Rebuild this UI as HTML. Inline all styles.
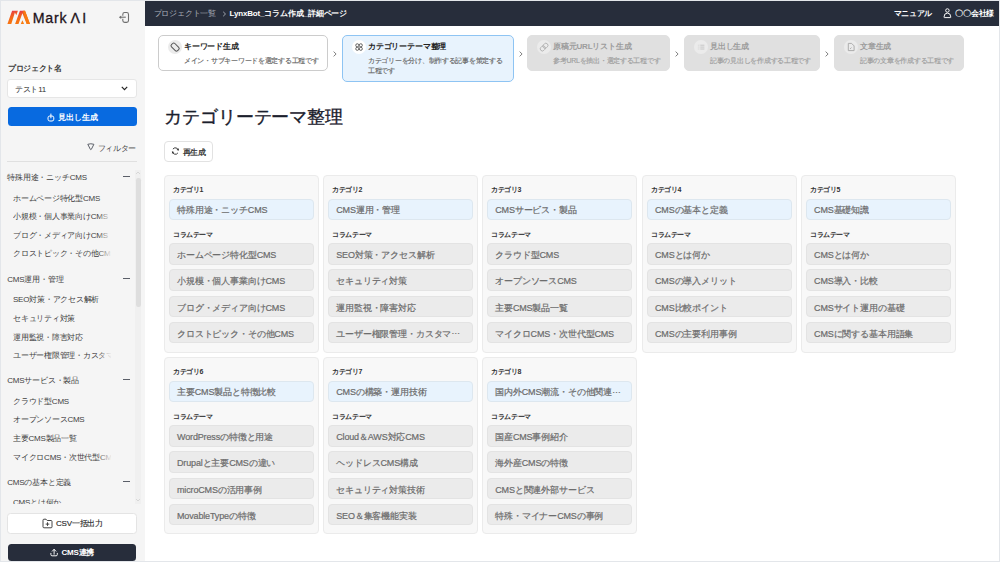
<!DOCTYPE html>
<html lang="ja"><head><meta charset="utf-8">
<style>
*{box-sizing:border-box;margin:0;padding:0}
html,body{width:1000px;height:562px;overflow:hidden;background:#fff;font-family:"Liberation Sans",sans-serif;position:relative}
.abs{position:absolute;white-space:nowrap}
#side{position:absolute;left:0;top:0;width:145px;height:562px;background:#f5f5f5}
#hdr{position:absolute;left:145px;top:1px;width:854px;height:25px;background:#272d3b}
.fr{position:absolute;background:#e3e6ea}
.t{position:absolute;white-space:nowrap;line-height:12px}
/* stepper */
.step{position:absolute;top:35px;height:36px;border-radius:5px;background:#e0e0e0;border:1px solid #e0e0e0}
.step .ic{position:absolute;left:8.6px;top:3.6px;width:14px;height:14px;border-radius:50%;background:#ebebeb}
.step .tt{position:absolute;left:25px;top:5px;font-size:8px;letter-spacing:-0.17px;font-weight:bold;line-height:12px;color:#9c9c9c;white-space:nowrap}
.step .st{position:absolute;left:25px;top:20.4px;font-size:7px;letter-spacing:-0.27px;line-height:10px;color:#9e9e9e;-webkit-text-stroke:0.15px currentColor;white-space:nowrap}
.arr{position:absolute;top:48px;font-size:9px;color:#666;line-height:10px}
/* cards */
.card{position:absolute;width:155px;background:#f8f8f8;border:1px solid #ebebeb;border-radius:4px}
.card .lab{position:absolute;left:8px;font-size:7px;letter-spacing:-0.4px;font-weight:bold;color:#333;line-height:10px;white-space:nowrap}
.card .fld{position:absolute;left:4px;width:145px;height:21.6px;border-radius:4px;font-size:9px;letter-spacing:-0.15px;line-height:22px;padding-left:7px;white-space:nowrap;overflow:hidden;color:#6b6b6b;-webkit-text-stroke:0.2px #6b6b6b}
.card .cat{background:#e8f3fd;border:1px solid #dde7ef;height:21px;line-height:21.2px}
.card .th{background:#ebebeb;border:1px solid #e3e3e3}
/* sidebar list */
.gh{position:absolute;left:7.2px;font-size:8px;letter-spacing:-0.19px;line-height:10px;color:#404040;white-space:nowrap}
.gm{position:absolute;left:123px;width:7px;height:1.1px;background:#5a5e68}
.it{position:absolute;left:13px;font-size:8px;letter-spacing:-0.23px;line-height:10px;color:#404040;white-space:nowrap;width:98px;overflow:hidden}
</style></head><body>

<!-- sidebar -->
<div id="side">
  <!-- logo -->
  <svg class="abs" style="left:0;top:0" width="32" height="30" viewBox="0 0 32 30">
    <defs><linearGradient id="lg" gradientUnits="userSpaceOnUse" x1="11" y1="9" x2="17" y2="22">
      <stop offset="0" stop-color="#d81f74"/><stop offset="0.28" stop-color="#ea4a36"/><stop offset="0.6" stop-color="#f56a16"/><stop offset="1" stop-color="#f87c10"/></linearGradient>
      <linearGradient id="lg2" gradientUnits="userSpaceOnUse" x1="19" y1="9" x2="25" y2="22">
      <stop offset="0" stop-color="#d81f74"/><stop offset="0.28" stop-color="#ea4a36"/><stop offset="0.6" stop-color="#f56a16"/><stop offset="1" stop-color="#f87c10"/></linearGradient></defs>
    <path d="M7.4 24 L12.1 10.7 L17.9 10.7 L16.3 15.3 L14.9 12.4 L11.3 24 Z" fill="url(#lg)"/>
    <path d="M15.1 24 L19.9 10.7 L25 10.7 L30 24 L26.7 24 L22.4 13.3 L18.5 24 Z" fill="url(#lg2)"/>
    <path d="M20.8 24 L22.4 20.2 L24.1 24 Z" fill="#f87c10"/>
    <path d="M22.9 10.7 L25 10.7 L30 24 L26.7 24 Z" fill="#f77a12"/>
  </svg>
  <div class="t" style="left:32.8px;top:10px;font-size:14.2px;line-height:16px;color:#221219;letter-spacing:0.75px;-webkit-text-stroke:0.3px #221219">Mark</div>
  <div class="t" style="left:70.6px;top:10px;font-size:14.2px;line-height:16px;color:#221219;-webkit-text-stroke:0.3px #221219">Λ</div>
  <div class="t" style="left:82.2px;top:10px;font-size:14.2px;line-height:16px;color:#221219;-webkit-text-stroke:0.3px #221219">I</div>
  <!-- collapse icon -->
  <svg class="abs" style="left:118px;top:11px" width="12" height="12" viewBox="0 0 12 12">
    <path d="M4.8 4.7 V3.4 a1.9 1.9 0 0 1 1.9 -1.9 H8.6 a1.9 1.9 0 0 1 1.9 1.9 V9.5 a1.9 1.9 0 0 1 -1.9 1.9 H6.7 a1.9 1.9 0 0 1 -1.9 -1.9 V7.7" fill="none" stroke="#6e6e6e" stroke-width="1.1"/>
    <path d="M2.4 6.2 H7.8" stroke="#6e6e6e" stroke-width="1.1"/>
    <path d="M0.9 6.2 L3.2 4.5 V7.9 Z" fill="#6e6e6e"/>
  </svg>

  <div class="t" style="left:8px;top:62.5px;font-size:8px;letter-spacing:-0.34px;font-weight:bold;color:#3a3a3a">プロジェクト名</div>
  <div class="abs" style="left:7px;top:78.6px;width:129.5px;height:19px;background:#fff;border:1px solid #e6e6e6;border-radius:3px"></div>
  <div class="t" style="left:15px;top:84px;font-size:8px;letter-spacing:-0.28px;color:#333">テスト11</div>
  <svg class="abs" style="left:121px;top:85.5px" width="7" height="5" viewBox="0 0 7 5"><path d="M0.8 0.9 L3.5 3.6 L6.2 0.9" fill="none" stroke="#222" stroke-width="1.2"/></svg>

  <div class="abs" style="left:8px;top:107.45px;width:128.5px;height:18.75px;background:#086ae0;border-radius:3.5px"></div>
  <svg class="abs" style="left:46.5px;top:112.5px" width="8" height="9" viewBox="0 0 8 9"><rect x="1" y="3" width="5.8" height="5" rx="1.8" fill="none" stroke="#fff" stroke-width="1"/><path d="M3.9 0.6 V5.3" stroke="#fff" stroke-width="1"/></svg>
  <div class="t" style="left:58px;top:112px;font-size:8px;letter-spacing:-0.12px;font-weight:bold;color:#fff">見出し生成</div>

  <svg class="abs" style="left:87.2px;top:143.2px" width="8" height="8" viewBox="0 0 8 8"><path d="M0.8 1.3 Q3.8 0.2 6.9 1.3 L4.3 6.4 Q3.85 7.1 3.4 6.4 Z" fill="none" stroke="#555a63" stroke-width="0.95" stroke-linejoin="round"/></svg>
  <div class="t" style="left:97.5px;top:143.3px;font-size:8px;letter-spacing:-0.32px;color:#444">フィルター</div>
  <div class="abs" style="left:7px;top:160.6px;width:130px;height:1px;background:#e0e0e0"></div>

  <!-- scrollbar -->
  <div class="abs" style="left:135px;top:169.5px;width:6px;height:334.5px;background:#f0f0f0"></div><svg class="abs" style="left:135px;top:170px" width="6" height="6" viewBox="0 0 6 6"><path d="M1 4 L3 2 L5 4" fill="none" stroke="#d4d4d4" stroke-width="0.9"/></svg><svg class="abs" style="left:135px;top:497px" width="6" height="6" viewBox="0 0 6 6"><path d="M1 2 L3 4 L5 2" fill="none" stroke="#d4d4d4" stroke-width="0.9"/></svg>
  <div class="abs" style="left:136px;top:178px;width:4.5px;height:129px;background:#dedede;border-radius:2.2px"></div>

  <div class="gh" style="top:173.3px">特殊用途・ニッチCMS</div><div class="gm" style="top:176.4px"></div>
  <div class="it" style="top:193.5px">ホームページ特化型CMS</div>
  <div class="it" style="top:212.1px">小規模・個人事業向けCMS</div>
  <div class="it" style="top:230.7px">ブログ・メディア向けCMS</div>
  <div class="it" style="top:249.3px">クロストピック・その他CMS</div>

  <div class="gh" style="top:274.9px">CMS運用・管理</div><div class="gm" style="top:278.4px"></div>
  <div class="it" style="top:295.4px">SEO対策・アクセス解析</div>
  <div class="it" style="top:314.0px">セキュリティ対策</div>
  <div class="it" style="top:332.7px">運用監視・障害対応</div>
  <div class="it" style="top:350.9px">ユーザー権限管理・カスタマイズ</div>

  <div class="gh" style="top:376.3px">CMSサービス・製品</div><div class="gm" style="top:379.4px"></div>
  <div class="it" style="top:396.7px">クラウド型CMS</div>
  <div class="it" style="top:415.3px">オープンソースCMS</div>
  <div class="it" style="top:433.9px">主要CMS製品一覧</div>
  <div class="it" style="top:452.5px">マイクロCMS・次世代型CMS</div>

  <div class="gh" style="top:478.3px">CMSの基本と定義</div><div class="gm" style="top:481.4px"></div>
  <div class="abs" style="left:0;top:504px;width:135px;height:8px;background:#f5f5f5"></div>
  <div class="it" style="top:497.5px;height:6.6px">CMSとは何か</div>

  <!-- fade mask for truncated items -->
  <div class="abs" style="left:98px;top:170px;width:14px;height:335px;background:linear-gradient(90deg,rgba(245,245,245,0),#f5f5f5)"></div>

  <div class="abs" style="left:7px;top:513px;width:129.5px;height:20.5px;background:#fff;border:1px solid #e4e4e4;border-radius:3.5px"></div>
  <svg class="abs" style="left:42px;top:517.5px" width="11" height="11" viewBox="0 0 11 11"><path d="M1 2.2 a1 1 0 0 1 1 -1 H4 L5.2 2.5 H9 a1 1 0 0 1 1 1 V8.8 a1 1 0 0 1 -1 1 H2 a1 1 0 0 1 -1 -1 Z M5.5 4.3 V7.9 M3.7 6.1 H7.3" fill="none" stroke="#444" stroke-width="1"/></svg>
  <div class="t" style="left:56px;top:517.7px;font-size:8px;letter-spacing:-0.21px;color:#2a2a2a;-webkit-text-stroke:0.15px #2a2a2a">CSV一括出力</div>

  <div class="abs" style="left:8px;top:543.6px;width:128px;height:17px;background:#272d3b;border-radius:3.5px"></div>
  <svg class="abs" style="left:50px;top:547.5px" width="9" height="9" viewBox="0 0 9 9"><path d="M4.1 6.2 V1.5 M2.3 3.2 L4.1 1.3 L5.9 3.2 M0.9 5.3 V6.6 Q0.9 7.8 2.1 7.8 H6.1 Q7.3 7.8 7.3 6.6 V5.3" fill="none" stroke="#fff" stroke-width="0.95" stroke-linecap="round" stroke-linejoin="round"/></svg>
  <div class="t" style="left:61.5px;top:547px;font-size:8px;letter-spacing:-0.25px;font-weight:bold;color:#fff">CMS連携</div>
</div>

<!-- header -->
<div id="hdr">
  <div class="t" style="left:8.7px;top:7px;font-size:8px;letter-spacing:-0.21px;color:#aab0ba">プロジェクト一覧</div>
  <svg class="abs" style="left:76.5px;top:9.5px" width="5" height="6" viewBox="0 0 5 6"><path d="M1.2 0.8 L3.5 3 L1.2 5.2" fill="none" stroke="#b0b5bd" stroke-width="0.9"/></svg>
  <div class="t" style="left:84.5px;top:7px;font-size:8px;letter-spacing:-0.16px;font-weight:bold;color:#fff">LynxBot_コラム作成_詳細ページ</div>
  <div class="t" style="left:748.5px;top:7px;font-size:8px;letter-spacing:-0.32px;font-weight:bold;color:#fff">マニュアル</div>
  <svg class="abs" style="left:798px;top:7px" width="9" height="11" viewBox="0 0 9 11"><circle cx="4.4" cy="2.5" r="1.75" fill="none" stroke="#fff" stroke-width="0.95"/><path d="M1 9.1 Q1 5.1 4.4 5.1 Q7.8 5.1 7.8 9.1 Q7.8 9.6 7.3 9.6 H1.5 Q1 9.6 1 9.1 Z" fill="none" stroke="#fff" stroke-width="0.95"/></svg>
  <div class="t" style="left:810px;top:7px;font-size:8px;letter-spacing:-0.14px;font-weight:bold;color:#fff">〇〇会社様</div>
</div>

<!-- stepper -->
<div class="step" style="left:158px;width:170px;background:#fff;border:1px solid #cccccc">
  <div class="ic" style="background:#ebebeb"></div>
  <svg class="abs" style="left:8.6px;top:3.6px" width="14" height="14" viewBox="0 0 14 14"><rect x="-4.3" y="-2.4" width="8.6" height="4.8" rx="1.6" transform="translate(7.1 7.1) rotate(45)" fill="none" stroke="#555" stroke-width="1"/></svg>
  <div class="tt" style="left:25px;color:#222">キーワード生成</div>
  <div class="st" style="left:25px;color:#666">メイン・サブキーワードを選定する工程です</div>
</div>
<svg class="abs" style="left:333.4px;top:50.5px" width="4" height="6" viewBox="0 0 4 6"><path d="M0.6 0.6 L3.1 3 L0.6 5.4" fill="none" stroke="#7a7a7a" stroke-width="0.95"/></svg>
<div class="step" style="left:342px;width:172px;height:46.6px;background:#e8f3fd;border:1px solid #8ec4f3">
  <div class="ic" style="background:#fff"></div>
  <svg class="abs" style="left:8.6px;top:3.6px" width="14" height="14" viewBox="0 0 14 14"><g fill="none" stroke="#555" stroke-width="0.9"><circle cx="5.3" cy="5.3" r="1.55"/><circle cx="8.8" cy="5.3" r="1.55"/><circle cx="5.3" cy="8.8" r="1.55"/><circle cx="8.8" cy="8.8" r="1.55"/></g></svg>
  <div class="tt" style="left:25px;color:#222">カテゴリーテーマ整理</div>
  <div class="st" style="color:#666">カテゴリーを分け、制作する記事を策定する<br>工程です</div>
</div>
<svg class="abs" style="left:518.7px;top:50.5px" width="4" height="6" viewBox="0 0 4 6"><path d="M0.6 0.6 L3.1 3 L0.6 5.4" fill="none" stroke="#7a7a7a" stroke-width="0.95"/></svg>
<div class="step" style="left:527px;width:143px">
  <div class="ic"></div>
  <svg class="abs" style="left:8.6px;top:3.6px" width="14" height="14" viewBox="0 0 14 14"><g transform="translate(7.1 7.1) rotate(-45)" fill="none" stroke="#b0b0b0" stroke-width="0.9"><rect x="-4.6" y="-2.1" width="5.4" height="4.2" rx="2.1"/><rect x="-0.8" y="-2.1" width="5.4" height="4.2" rx="2.1"/></g></svg>
  <div class="tt">原稿元URLリスト生成</div>
  <div class="st">参考URLを抽出・選定する工程です</div>
</div>
<svg class="abs" style="left:674.9px;top:50.5px" width="4" height="6" viewBox="0 0 4 6"><path d="M0.6 0.6 L3.1 3 L0.6 5.4" fill="none" stroke="#7a7a7a" stroke-width="0.95"/></svg>
<div class="step" style="left:684px;width:136px">
  <div class="ic"></div>
  <svg class="abs" style="left:8.6px;top:3.6px" width="14" height="14" viewBox="0 0 14 14"><g stroke="#b4b4b4" stroke-width="0.65"><path d="M3.9 5.2 H5.6 M3.9 7.1 H5.6 M3.9 9 H5.6" stroke="#d0d0d0"/><path d="M6.3 5.2 H10.4 M6.3 7.1 H10.4 M6.3 9 H10.4"/></g></svg>
  <div class="tt">見出し生成</div>
  <div class="st">記事の見出しを作成する工程です</div>
</div>
<svg class="abs" style="left:825.2px;top:50.5px" width="4" height="6" viewBox="0 0 4 6"><path d="M0.6 0.6 L3.1 3 L0.6 5.4" fill="none" stroke="#7a7a7a" stroke-width="0.95"/></svg>
<div class="step" style="left:834px;width:129.5px">
  <div class="ic"></div>
  <svg class="abs" style="left:8.6px;top:3.6px" width="14" height="14" viewBox="0 0 14 14"><path d="M4.3 3.4 H7.6 L10.1 5.9 V10.6 H4.3 Z" fill="none" stroke="#aaa" stroke-width="0.95" stroke-linejoin="round"/><path d="M6 9 L7.5 7.6" stroke="#aaa" stroke-width="0.9"/></svg>
  <div class="tt">文章生成</div>
  <div class="st">記事の文章を作成する工程です</div>
</div>

<!-- title -->
<div class="t" style="left:164.3px;top:107px;font-size:18px;letter-spacing:-0.14px;line-height:21px;color:#1b202c;-webkit-text-stroke:0.35px #1b202c">カテゴリーテーマ整理</div>
<div class="abs" style="left:164px;top:141px;width:48.6px;height:20.6px;background:#fff;border:1px solid #e2e2e2;border-radius:4px"></div>
<svg class="abs" style="left:170.5px;top:147.3px" width="9" height="8" viewBox="0 0 9 8"><path d="M7.3 3.3 A3 3 0 0 0 1.9 2.1 M1.4 4.6 A3 3 0 0 0 6.9 5.9" fill="none" stroke="#333" stroke-width="0.95"/><path d="M7.9 1.2 L7.7 3.6 L5.5 3.1 Z M0.9 6.8 L1.1 4.4 L3.3 4.9 Z" fill="#333"/></svg>
<div class="t" style="left:182.5px;top:146.5px;font-size:8px;letter-spacing:-0.2px;color:#2a2a2a;-webkit-text-stroke:0.25px #2a2a2a">再生成</div>

<!-- category cards -->
<!--cards-->
<div class="card" style="left:164px;top:175px;height:178.0px"><div class="lab" style="top:9.4px">カテゴリ1</div><div class="fld cat" style="top:23px">特殊用途・ニッチCMS</div><div class="lab" style="top:53.5px">コラムテーマ</div><div class="fld th" style="top:67.0px">ホームページ特化型CMS</div><div class="fld th" style="top:93.3px">小規模・個人事業向けCMS</div><div class="fld th" style="top:119.6px">ブログ・メディア向けCMS</div><div class="fld th" style="top:145.9px">クロストピック・その他CMS</div></div>
<div class="card" style="left:323.2px;top:175px;height:178.0px"><div class="lab" style="top:9.4px">カテゴリ2</div><div class="fld cat" style="top:23px">CMS運用・管理</div><div class="lab" style="top:53.5px">コラムテーマ</div><div class="fld th" style="top:67.0px">SEO対策・アクセス解析</div><div class="fld th" style="top:93.3px">セキュリティ対策</div><div class="fld th" style="top:119.6px">運用監視・障害対応</div><div class="fld th" style="top:145.9px">ユーザー権限管理・カスタマ<span style="position:relative;top:-2.5px">…</span></div></div>
<div class="card" style="left:482.2px;top:175px;height:178.0px"><div class="lab" style="top:9.4px">カテゴリ3</div><div class="fld cat" style="top:23px">CMSサービス・製品</div><div class="lab" style="top:53.5px">コラムテーマ</div><div class="fld th" style="top:67.0px">クラウド型CMS</div><div class="fld th" style="top:93.3px">オープンソースCMS</div><div class="fld th" style="top:119.6px">主要CMS製品一覧</div><div class="fld th" style="top:145.9px">マイクロCMS・次世代型CMS</div></div>
<div class="card" style="left:642px;top:175px;height:178.0px"><div class="lab" style="top:9.4px">カテゴリ4</div><div class="fld cat" style="top:23px">CMSの基本と定義</div><div class="lab" style="top:53.5px">コラムテーマ</div><div class="fld th" style="top:67.0px">CMSとは何か</div><div class="fld th" style="top:93.3px">CMSの導入メリット</div><div class="fld th" style="top:119.6px">CMS比較ポイント</div><div class="fld th" style="top:145.9px">CMSの主要利用事例</div></div>
<div class="card" style="left:801.1px;top:175px;height:178.0px"><div class="lab" style="top:9.4px">カテゴリ5</div><div class="fld cat" style="top:23px">CMS基礎知識</div><div class="lab" style="top:53.5px">コラムテーマ</div><div class="fld th" style="top:67.0px">CMSとは何か</div><div class="fld th" style="top:93.3px">CMS導入・比較</div><div class="fld th" style="top:119.6px">CMSサイト運用の基礎</div><div class="fld th" style="top:145.9px">CMSに関する基本用語集</div></div>
<div class="card" style="left:164px;top:357.0px;height:177.4px"><div class="lab" style="top:9.4px">カテゴリ6</div><div class="fld cat" style="top:23px">主要CMS製品と特徴比較</div><div class="lab" style="top:53.5px">コラムテーマ</div><div class="fld th" style="top:67.0px">WordPressの特徴と用途</div><div class="fld th" style="top:93.3px">Drupalと主要CMSの違い</div><div class="fld th" style="top:119.6px">microCMSの活用事例</div><div class="fld th" style="top:145.9px">MovableTypeの特徴</div></div>
<div class="card" style="left:323.2px;top:357.0px;height:177.4px"><div class="lab" style="top:9.4px">カテゴリ7</div><div class="fld cat" style="top:23px">CMSの構築・運用技術</div><div class="lab" style="top:53.5px">コラムテーマ</div><div class="fld th" style="top:67.0px">Cloud＆AWS対応CMS</div><div class="fld th" style="top:93.3px">ヘッドレスCMS構成</div><div class="fld th" style="top:119.6px">セキュリティ対策技術</div><div class="fld th" style="top:145.9px">SEO＆集客機能実装</div></div>
<div class="card" style="left:482.2px;top:357.0px;height:177.4px"><div class="lab" style="top:9.4px">カテゴリ8</div><div class="fld cat" style="top:23px">国内外CMS潮流・その他関連<span style="position:relative;top:-2.5px">…</span></div><div class="lab" style="top:53.5px">コラムテーマ</div><div class="fld th" style="top:67.0px">国産CMS事例紹介</div><div class="fld th" style="top:93.3px">海外産CMSの特徴</div><div class="fld th" style="top:119.6px">CMSと関連外部サービス</div><div class="fld th" style="top:145.9px">特殊・マイナーCMSの事例</div></div>
<!--/cards-->

<!-- frame -->
<div class="fr" style="left:0;top:0;width:1000px;height:1px"></div>
<div class="fr" style="left:0;top:561px;width:1000px;height:1px"></div>
<div class="fr" style="left:0;top:0;width:1px;height:562px"></div>
<div class="fr" style="left:999px;top:0;width:1px;height:562px"></div>
</body></html>
